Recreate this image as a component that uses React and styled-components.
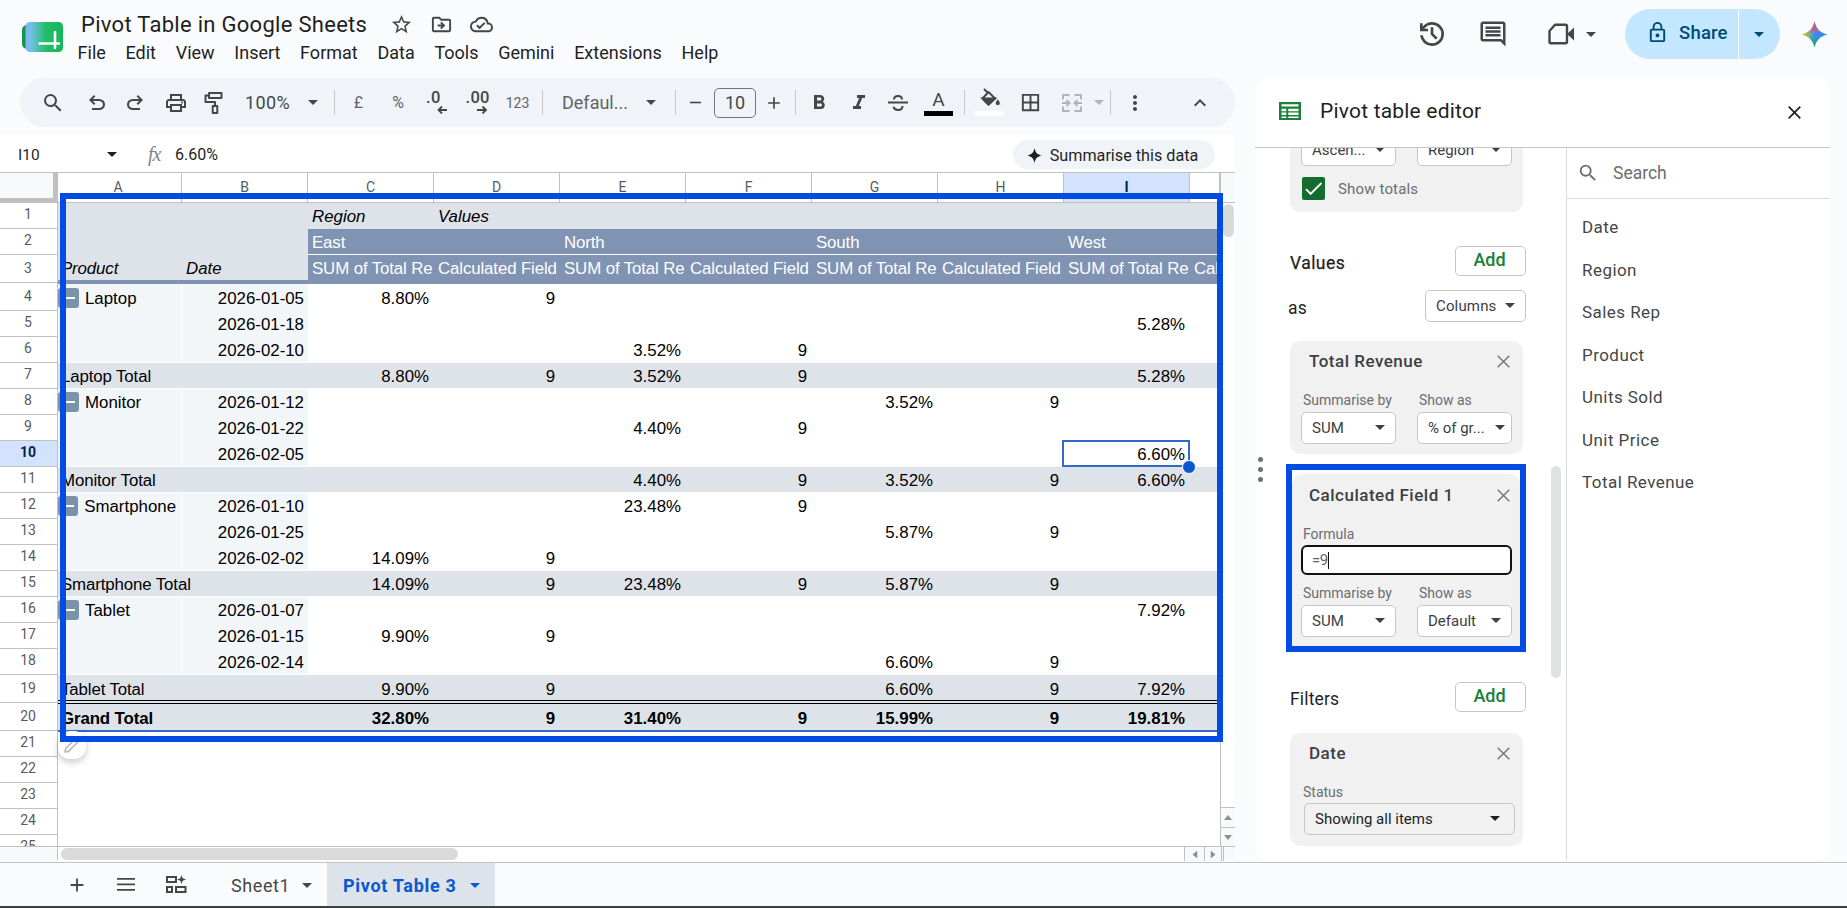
import React from 'react';
import styled, { createGlobalStyle, css } from 'styled-components';
import {
  MdSearch, MdStarBorder, MdOutlineDriveFileMove, MdOutlineCloudDone,
  MdOutlineComment, MdLockOutline, MdOutlinePrint, MdFormatBold, MdFormatItalic,
  MdBorderAll, MdMoreVert, MdKeyboardArrowUp, MdAdd, MdRemove, MdCheck,
} from 'react-icons/md';

const GlobalStyle = createGlobalStyle`
  * { box-sizing: border-box; }
  body {
    margin: 0;
    background: #f9fbfd;
    font-family: Roboto, "Liberation Sans", sans-serif;
    color: #1f1f1f;
    overflow: hidden;
  }
  svg { display: block; flex: none; }
`

const Page = styled.div`
  display: flex;
  flex-direction: column;
  width: 1847px;
  height: 908px;
  background: #f9fbfd;
  border-bottom: 2px solid #3c4043;
`

/* ---------- title bar ---------- */
const TitleBar = styled.header`
  display: flex;
  height: 78px;
  padding-left: 22px;
  color: #444746;
`
const Logo = styled.svg`
  margin-top: 22px;
`
const TitleBlock = styled.div`
  margin-left: 7px;
  padding-top: 9px;
  flex: 1;
`
const TitleLine = styled.div`
  display: flex;
  align-items: center;
  height: 30px;
  padding-left: 10px;
`
const Title = styled.h1`
  margin: 0 23px 0 0;
  width: 286px;
  white-space: nowrap;
  font-size: 22px;
  letter-spacing: 0.29px;
  font-weight: 400;
  color: #1f1f1f;
`
const TitleIcon = styled.span`
  width: 24px;
  margin-right: 16px;
`
const Menus = styled.nav`
  display: flex;
  gap: 19.7px;
  padding-left: 6.6px;
  height: 27px;
  align-items: center;
  font-size: 18px;
  color: #1f1f1f;
`
const Actions = styled.div`
  display: flex;
  align-items: center;
  height: 50px;
  margin-top: 9px;
`
const Action = styled.span`
  display: flex;
  align-items: center;
  margin-right: ${p => p.$gap}px;
`
const Share = styled.div`
  display: flex;
  width: 155px;
  height: 50px;
  margin-right: 21px;
  border-radius: 25px;
  overflow: hidden;
  background: #c2e7ff;
  color: #004a77;
  font-size: 18.5px;
  font-weight: 500;
`
const ShareMain = styled.div`
  display: flex;
  align-items: center;
  gap: 10px;
  width: 114px;
  padding: 0 0 3px 21px;
  border-right: 1px solid #fff;
  letter-spacing: 0.2px;
`
const ShareMore = styled.div`
  display: flex;
  flex: 1;
  align-items: center;
  justify-content: center;
  padding-right: 1px;
`
const Caret = styled.i`
  flex: none;
  width: 0;
  height: 0;
  border: 5px solid transparent;
  border-top-color: currentColor;
  border-bottom: 0;
`

/* ---------- workspace ---------- */
const Main = styled.main`
  display: flex;
  height: 784px;
`
const Workspace = styled.section`
  width: 1235px;
  display: flex;
  flex-direction: column;
`
const Toolbar = styled.div`
  display: flex;
  align-items: center;
  height: 49px;
  margin: 0 0 8px 20px;
  border-radius: 25px;
  background: #f0f4f9;
  color: #444746;
  font-size: 18px;
`
const Tool = styled.span`
  display: flex;
  flex: none;
  align-items: center;
  justify-content: center;
  width: ${p => p.$w}px;
  font-size: ${p => p.$size || 18}px;
  color: ${p => p.$muted ? '#b1b4b8' : p.$soft ? '#5f6368' : 'inherit'};
  letter-spacing: ${p => p.$ls || 0}px;
`
const Divider = styled.span`
  flex: none;
  width: 1px;
  height: 25px;
  background: #c7c7c7;
`
const SizeBox = styled.span`
  display: flex;
  flex: none;
  align-items: center;
  justify-content: center;
  width: 42px;
  height: 30px;
  border: 1px solid #747775;
  border-radius: 5px;
`
const ColorTool = styled.span`
  display: flex;
  flex: none;
  flex-direction: column;
  align-items: center;
  justify-content: flex-end;
  width: 29px;
  height: 27px;
  padding-bottom: ${p => p.$lift || 0}px;
  margin-top: -1px;
  border-bottom: 5px solid ${p => p.$color};
  font-size: 19px;
  line-height: 22px;
`
const Decimal = styled.span`
  display: flex;
  flex-direction: column;
  width: 22px;
  height: 23px;
  font-size: 16.5px;
  font-weight: 500;
  line-height: 14px;
  letter-spacing: 0.3px;
`
const FormulaBar = styled.div`
  display: flex;
  align-items: center;
  height: 38px;
  padding: 2px 20px 0 18px;
  background: #fff;
  border-bottom: 1px solid #c0c0c0;
  font-size: 16px;
`
const NameBox = styled.div`
  display: flex;
  align-items: center;
  justify-content: space-between;
  width: 99px;
  margin-right: 31px;
  font-size: 15.5px;
`
const Fx = styled.i`
  width: 27px;
  font: italic 20px "Liberation Serif", serif;
  letter-spacing: -1px;
  color: #80868b;
`
const Summarise = styled.div`
  display: flex;
  align-items: center;
  justify-content: center;
  gap: 8px;
  width: 202px;
  height: 29px;
  margin-left: auto;
  padding: 1px 3px 0 0;
  border-radius: 15px;
  background: #f0f4f9;
  font-size: 16.2px;
`

/* ---------- grid ---------- */
const Sheet = styled.div`
  position: relative;
  display: flex;
  height: 688px;
  background: #fff;
`
const RowHeads = styled.div`
  display: flex;
  flex-direction: column;
  width: 58px;
  height: 687px;
  overflow: hidden;
  background: #f8f9fa;
`
const Corner = styled.div`
  flex: none;
  height: 30px;
  background: #f8f9fa;
  border-right: 5px solid #c0c0c0;
  border-bottom: 5px solid #c0c0c0;
`
const HeadList = styled.div`
  height: 644px;
  overflow: hidden;
  background: #fff;
  border-bottom: 1px solid #c0c0c0;
`
const RowHead = styled.div`
  display: flex;
  align-items: center;
  justify-content: center;
  height: ${p => p.$h}px;
  padding: 0 1px ${p => p.$h === 28 ? 2 : 3}px 0;
  border-right: 1px solid #c0c0c0;
  border-bottom: 1px solid #c0c0c0;
  font-size: 14px;
  color: #575b5f;
  ${p => p.$active && css`
    background: #d3e3fd;
    color: #041e49;
    font-weight: 700;
  `}
`
const HeadFoot = styled.div`
  flex: 1;
  border-right: 1px solid #c0c0c0;
`
const Cells = styled.div`
  width: 1163px;
  border-right: 1px solid #c0c0c0;
  height: 674px;
  overflow: hidden;
`
const ColHeads = styled.div`
  display: flex;
  height: 30px;
  border-bottom: 1px solid #c0c0c0;
`
const ColHead = styled.div`
  flex: none;
  width: ${p => p.$w}px;
  padding-right: ${p => p.$w === 124 ? 3 : 0}px;
  line-height: 29px;
  text-align: center;
  font-size: 14px;
  color: #575b5f;
  border-right: 1px solid #c0c0c0;
  ${p => p.$active && css`
    background: #d3e3fd;
    color: #041e49;
    font-weight: 700;
  `}
`
const GridRow = styled.div`
  display: flex;
  height: ${p => p.$h}px;
`
const fills = {
  none: '#fff',
  total: '#dee3ea',
  head: '#8093b3',
  pale: '#f3f6f8',
}
const Cell = styled.div`
  display: flex;
  align-items: flex-end;
  flex: none;
  width: ${p => p.$w}px;
  padding: 0 ${p => p.$tight ? 4 : 5}px ${p => p.$pb}px ${p => p.$first ? 3 : 4}px;
  justify-content: ${p => p.$right ? 'flex-end' : 'flex-start'};
  background: ${p => fills[p.$fill]};
  color: ${p => p.$fill === 'head' ? '#fff' : '#000'};
  border-bottom: ${p => p.$line || '0 solid'};
  border-right: ${p => p.$split ? '1px solid #fff' : '0'};
  font: 16.85px/20px "Liberation Sans", Arial, sans-serif;
  font-style: ${p => p.$italic ? 'italic' : 'normal'};
  font-weight: ${p => p.$bold ? 700 : 400};
  letter-spacing: ${p => p.$fill === 'head' || p.$spill ? -0.12 : 0}px;
  white-space: nowrap;
  overflow: ${p => p.$spill ? 'visible' : 'hidden'};
  > span { position: relative; }
`
const Collapse = styled.span`
  display: flex;
  align-items: center;
  justify-content: center;
  width: 21px;
  height: 20px;
  margin: 0 6px 1px -3px;
  border-radius: 3px;
  background: #7b92ab;
  &::after {
    content: '';
    width: 10px;
    height: 2px;
    margin-left: 2px;
    background: #fff;
  }
`
const Selection = styled.div`
  position: absolute;
  left: 1062px;
  top: 267px;
  width: 128px;
  height: 27px;
  border: 2px solid #3069c9;
  &::after {
    content: '';
    position: absolute;
    right: -8px;
    bottom: -9px;
    width: 12px;
    height: 12px;
    border-radius: 50%;
    border: 1px solid #fff;
    background: #0b57d0;
  }
`
const EditPill = styled.div`
  position: absolute;
  left: 58px;
  top: 558px;
  display: flex;
  align-items: center;
  justify-content: center;
  width: 28px;
  height: 28px;
  padding: 1px 2px 0 0;
  border-radius: 12px;
  background: #fff;
  box-shadow: 0 3px 7px rgba(60, 64, 67, 0.28);
`
const Marker = styled.div`
  position: absolute;
  left: 60px;
  top: 20px;
  width: 1163px;
  height: 549px;
  border: 6px solid #034ce3;
`
const SideScroll = styled.div`
  display: flex;
  flex-direction: column;
  width: 14px;
  height: 674px;
  background: #fff;
`
const SideTop = styled.div`
  height: 30px;
  background: #f8f9fa;
  border-bottom: 1px solid #c0c0c0;
`
const SideThumb = styled.div`
  width: 11px;
  height: 33px;
  margin: 1px 0 auto 2px;
  border-radius: 6px;
  background: #dadada;
`
const ScrollButton = styled.div`
  display: flex;
  align-items: center;
  justify-content: center;
  width: ${p => p.$w}px;
  height: ${p => p.$h}px;
  color: #8d8f91;
  background: #f8f9fa;
  border: 0 solid #c0c0c0;
  border-width: ${p => p.$side ? '0 0 0 1px' : '1px 0 0 0'};
`
const BottomScroll = styled.div`
  position: absolute;
  left: 58px;
  right: 0;
  top: 673px;
  height: 15px;
  display: flex;
  border-top: 1px solid #c0c0c0;
  background: #fff;
`
const BottomThumb = styled.div`
  width: 397px;
  height: 12px;
  margin: 1px auto 0 3px;
  border-radius: 6px;
  background: #dadada;
`
const ScrollCorner = styled.div`
  width: 12px;
  background: #f8f9fa;
  border-left: 1px solid #c0c0c0;
`

/* ---------- pivot editor ---------- */
const Panel = styled.aside`
  width: 575px;
  height: 783px;
  margin-left: 20px;
  border-radius: 16px;
  background: #fff;
  overflow: hidden;
`
const PanelHead = styled.div`
  display: flex;
  align-items: center;
  height: 70px;
  padding: 0 29px 3px 24px;
  border-bottom: 1px solid #c4c7c5;
  font-size: 21px;
  letter-spacing: 0.2px;
  svg:last-child { margin: 2px 0 0 auto; }
`
const PanelTitle = styled.span`
  margin-left: 19px;
`
const PanelBody = styled.div`
  display: flex;
  height: 713px;
`
const Setup = styled.div`
  display: flex;
  flex: none;
  width: 312px;
  border-right: 1px solid #dadce0;
`
const Grip = styled.div`
  display: flex;
  flex-direction: column;
  justify-content: center;
  gap: 5px;
  width: 8px;
  margin-left: 3px;
  padding-bottom: 71px;
  span {
    width: 5px;
    height: 5px;
    border-radius: 50%;
    background: #6f7173;
  }
`
const SetupList = styled.div`
  width: 273px;
  padding-left: 24px;
`
const SetupScroll = styled.div`
  width: 10px;
  height: 212px;
  margin: 318px 0 0 12px;
  border-radius: 5px;
  background: #e0e2e1;
`
const Card = styled.div`
  width: 233px;
  height: ${p => p.$h}px;
  padding: ${p => p.$cut ? '0' : '10px'} 11px 0 11px;
  border-radius: ${p => p.$cut ? '0 0 10px 10px' : '10px'};
  background: #f1f1f1;
`
const Highlight = styled.div`
  width: 240px;
  height: 188px;
  margin: 10px 0 0 -4px;
  padding: 4px 0 0 0;
  border: 6px solid #034ce3;
  ${Card} {
    width: 228px;
    padding: 11px 8px 0 9px;
    border-radius: 10px 10px 0 0;
  }
`
const CardTitle = styled.div`
  display: flex;
  align-items: center;
  justify-content: space-between;
  height: 20px;
  padding: 0 2px 0 8px;
  font-size: 17px;
  font-weight: 500;
  letter-spacing: 0.5px;
  color: #3c4043;
  svg { color: #6b6e70; }
`
const Pair = styled.div`
  display: flex;
  justify-content: space-between;
  margin-top: ${p => p.$top || 0}px;
`
const Field = styled.div`
  width: 95px;
`
const Label = styled.div`
  height: 20px;
  margin: 0 0 ${p => p.$close ? 2 : 3}px 2px;
  font-size: 14px;
  line-height: 22px;
  color: #6b6e70;
`
const Select = styled.div`
  display: flex;
  align-items: center;
  justify-content: space-between;
  width: ${p => p.$w || 95}px;
  height: 32px;
  padding: 0 ${p => p.$pr || 10}px 1px 10px;
  border: 1px solid #c4c7c5;
  border-radius: 5px;
  background: ${p => p.$clear ? 'transparent' : '#fff'};
  color: ${p => p.$clear ? '#1f1f1f' : '#3c4043'};
  font-size: 15px;
  white-space: nowrap;
`
const CheckRow = styled.div`
  display: flex;
  align-items: center;
  height: 23px;
  margin-top: 11px;
  font-size: 15px;
  letter-spacing: 0.15px;
  color: #6b6e70;
`
const Check = styled.span`
  display: flex;
  align-items: center;
  justify-content: center;
  width: 23px;
  height: 23px;
  margin: 0 13px 0 1px;
  border-radius: 2px;
  background: #146c2e;
  color: #fff;
`
const SectionHead = styled.div`
  display: flex;
  align-items: center;
  justify-content: space-between;
  width: ${p => p.$shift ? 238 : 236}px;
  height: 30px;
  margin: ${p => p.$top}px 0 0 ${p => p.$shift ? -2 : 0}px;
  font-size: 17.5px;
  letter-spacing: ${p => p.$bold ? 0.45 : 0.15}px;
  -webkit-text-stroke: ${p => p.$bold ? 0.25 : 0}px;
`
const SectionName = styled.span`
  padding-top: 3px;
`
const AddButton = styled.button`
  width: 71px;
  height: 30px;
  padding: 0 2px 3px 0;
  border: 1px solid #c4c7c5;
  border-radius: 5px;
  background: #fff;
  color: #188038;
  font: 500 18px Roboto, sans-serif;
  -webkit-text-stroke: 0;
`
const FormulaInput = styled.div`
  display: flex;
  align-items: center;
  width: 211px;
  height: 30px;
  padding-left: 9px;
  border: 2px solid #111;
  border-radius: 6px;
  background: #fff;
  font-size: 15px;
  letter-spacing: -0.5px;
  color: #5f6368;
  &::after {
    content: '';
    width: 1px;
    height: 17px;
    background: #111;
  }
`
const FieldList = styled.div`
  flex: 1;
`
const SearchBox = styled.div`
  display: flex;
  align-items: center;
  gap: 14px;
  height: 51px;
  padding-left: 10px;
  border-bottom: 1px solid #dadce0;
  font-size: 17.5px;
  color: #6b6e70;
`
const FieldName = styled.div`
  height: 42.5px;
  padding-left: 15px;
  line-height: 42px;
  font-size: 17px;
  letter-spacing: 0.45px;
  color: #444746;
`
const FieldNames = styled.div`
  padding-top: 7.4px;
`
const Gap = styled.div`
  height: ${p => p.$h}px;
`
const StatusSelect = styled.div`
  margin-left: 3px;
`
// scrolled half out of view under the panel heading
const CutBox = styled.div`
  display: flex;
  align-items: flex-end;
  height: 18px;
  overflow: hidden;
`

/* ---------- sheet tabs ---------- */
const TabBar = styled.footer`
  display: flex;
  align-items: center;
  height: 44px;
  border-top: 1px solid #c0c4c4;
  color: #444746;
`
const TabTool = styled.span`
  display: flex;
  flex: none;
  justify-content: center;
  width: ${p => p.$w}px;
  padding-left: ${p => p.$pl || 0}px;
`
const Tab = styled.div`
  display: flex;
  align-items: center;
  gap: ${p => p.$active ? 13 : 12}px;
  width: ${p => p.$w}px;
  height: 43px;
  padding: 1px 0 0 ${p => p.$active ? 16 : 31}px;
  font-size: 18px;
  letter-spacing: 0.6px;
  ${p => p.$active && css`
    background: #dde3ea;
    color: #0b57d0;
    font-weight: 700;
    letter-spacing: 0.7px;
  `}
`

const menus = ['File', 'Edit', 'View', 'Insert', 'Format', 'Data', 'Tools', 'Gemini', 'Extensions', 'Help'];
const letters = ['A', 'B', 'C', 'D', 'E', 'F', 'G', 'H', 'I', ''];
const colWidth = (i) => (i === 0 ? 124 : i === 9 ? 30 : 126);
const fields = ['Date', 'Region', 'Sales Rep', 'Product', 'Units Sold', 'Unit Price', 'Total Revenue'];

const headHeight = (n) => ([3, 4, 19, 20].includes(n) ? 28 : 26);
const cellHeight = { 3: 29, 4: 27, 19: 29, 20: 28 };
// space under the text, bottom border included
const bottomPad = { 3: 5, 19: 4, 20: 3 };

// values are keyed by column letter
const rows = [
  { type: 'top', C: 'Region', D: 'Values' },
  { type: 'region', C: 'East', E: 'North', G: 'South', I: 'West' },
  { type: 'names', A: 'Product', B: 'Date' },
  { product: 'Laptop', B: '2026-01-05', C: '8.80%', D: '9' },
  { B: '2026-01-18', I: '5.28%' },
  { B: '2026-02-10', E: '3.52%', F: '9', last: true },
  { type: 'total', A: 'Laptop Total', C: '8.80%', D: '9', E: '3.52%', F: '9', I: '5.28%' },
  { product: 'Monitor', B: '2026-01-12', G: '3.52%', H: '9' },
  { B: '2026-01-22', E: '4.40%', F: '9' },
  { B: '2026-02-05', I: '6.60%', last: true },
  { type: 'total', A: 'Monitor Total', E: '4.40%', F: '9', G: '3.52%', H: '9', I: '6.60%' },
  { product: 'Smartphone', B: '2026-01-10', E: '23.48%', F: '9' },
  { B: '2026-01-25', G: '5.87%', H: '9' },
  { B: '2026-02-02', C: '14.09%', D: '9', last: true },
  { type: 'total', A: 'Smartphone Total', C: '14.09%', D: '9', E: '23.48%', F: '9', G: '5.87%', H: '9' },
  { product: 'Tablet', B: '2026-01-07', I: '7.92%' },
  { B: '2026-01-15', C: '9.90%', D: '9' },
  { B: '2026-02-14', G: '6.60%', H: '9', last: true },
  { type: 'total', A: 'Tablet Total', C: '9.90%', D: '9', G: '6.60%', H: '9', I: '7.92%' },
  { type: 'grand', A: 'Grand Total', C: '32.80%', D: '9', E: '31.40%', F: '9', G: '15.99%', H: '9', I: '19.81%' },
];

const PivotRow = ({ row, n }) => {
  const white = '1px solid #fff';
  return (
    <GridRow $h={cellHeight[n] || 26}>
      {letters.map((letter, i) => {
        const label = i < 2;
        let fill = label ? 'pale' : 'none';
        let line;
        let text = row[letter];
        if (row.type === 'top') fill = 'total';
        if (row.type === 'region') {
          fill = label ? 'total' : 'head';
          line = label ? undefined : white;
        }
        if (row.type === 'names') {
          fill = label ? 'total' : 'head';
          line = label ? '4px solid #8093b3' : undefined;
          if (!label) text = i % 2 === 0 ? 'SUM of Total Re' : 'Calculated Field';
        }
        if (row.type === 'total') {
          fill = 'total';
          line = n === 19 ? '4px double #000' : white;
        }
        if (row.type === 'grand') {
          fill = 'total';
          line = '2px solid #3069c9';
        }
        if (row.last) line = white;
        const border = line ? parseInt(line, 10) : 0;
        const heading = ['top', 'region', 'names'].includes(row.type);
        return (
          <Cell
            key={i}
            $w={colWidth(i)}
            $fill={fill}
            $line={line}
            $pb={(bottomPad[n] ?? 2) - border}
            $first={i === 0}
            $tight={i === 1 || heading}
            $split={i === 0 && fill === 'pale'}
            $right={!heading && i > 0}
            $italic={row.type === 'top' || (row.type === 'names' && label)}
            $bold={row.type === 'grand'}
            $spill={i === 0 && fill === 'total'}
          >
            {row.product && i === 0 && <Collapse />}
            <span>{row.product && i === 0 ? row.product : text}</span>
          </Cell>
        );
      })}
    </GridRow>
  );
}

const X = ({ width = 1.5 }) => (
  <svg width="13" height="13" viewBox="0 0 13 13" fill="none" stroke="currentColor" strokeWidth={width}>
    <path d="M.7.7l11.600 11.600M12.300.7L.7 12.300" />
  </svg>
)

const Symbol = ({ size, d }) => (
  <svg width={size} height={size} viewBox="0 -960 960 960" fill="currentColor">
    <path d={d} />
  </svg>
)

const SheetsLogo = () => (
  <Logo width="42" height="31" viewBox="0 0 42 31">
    <defs>
      <linearGradient id="logoFill" x1="0" x2="1">
        <stop offset="0" stopColor="#7cb8f7" />
        <stop offset="0.15" stopColor="#74bfe6" />
        <stop offset="0.55" stopColor="#22bd68" />
        <stop offset="1" stopColor="#17b557" />
      </linearGradient>
    </defs>
    <rect x="0" y="3" width="20" height="24" rx="5" fill="#14964a" />
    <rect x="3.500" y="0" width="37.500" height="30" rx="4.500" fill="url(#logoFill)" />
    <path d="M17.500 21.500h19.500M33 10v16" stroke="#fff" strokeWidth="2.600" strokeLinecap="round" />
  </Logo>
)

const sparkPath = 'M13.500.5c1.200 6.500 5.500 11.500 13 13-7.500 1.500-11.800 6.500-13 13-1.200-6.500-5.500-11.500-13-13 7.500-1.500 11.800-6.500 13-13z';
const Spark = () => (
  <svg width="27" height="27" viewBox="0 0 27 27">
    <defs>
      <linearGradient id="sparkA" x1="0" y1=".5" x2="1" y2=".5">
        <stop offset="0" stopColor="#f9c10c" />
        <stop offset=".3" stopColor="#8fb56a" />
        <stop offset=".5" stopColor="#3a8cf5" />
        <stop offset="1" stopColor="#3186ff" />
      </linearGradient>
      <linearGradient id="sparkB" x1=".5" y1="0" x2=".5" y2="1">
        <stop offset="0" stopColor="#f0433a" />
        <stop offset=".38" stopColor="#d0607a" stopOpacity=".5" />
        <stop offset=".5" stopColor="#3186ff" stopOpacity="0" />
        <stop offset=".7" stopColor="#14a866" stopOpacity=".4" />
        <stop offset="1" stopColor="#0ebc5f" />
      </linearGradient>
    </defs>
    <path d={sparkPath} fill="url(#sparkA)" />
    <path d={sparkPath} fill="url(#sparkB)" />
  </svg>
)

const DropSelect = ({ children, ...rest }) => (
  <Select {...rest}>
    {children}
    <Caret />
  </Select>
)

const CutSelect = ({ children }) => (
  <CutBox>
    <DropSelect>{children}</DropSelect>
  </CutBox>
)

const TopBar = () => (
  <TitleBar>
    <SheetsLogo />
    <TitleBlock>
      <TitleLine>
        <Title>Pivot Table in Google Sheets</Title>
        <TitleIcon><MdStarBorder size={23} /></TitleIcon>
        <TitleIcon><MdOutlineDriveFileMove size={23} /></TitleIcon>
        <TitleIcon><MdOutlineCloudDone size={23} /></TitleIcon>
      </TitleLine>
      <Menus>
        {menus.map(m => <span key={m}>{m}</span>)}
      </Menus>
    </TitleBlock>
    <Actions>
      <Action $gap={30}>
        <Symbol size={32} d="M480-120q-138 0-240.500-91.500T122-440h82q14 104 92.500 172T480-200q117 0 198.500-81.500T760-480q0-117-81.500-198.500T480-760q-69 0-129 32t-101 88h110v80H120v-240h80v94q51-64 124.500-99T480-840q75 0 140.500 28.500t114 77q48.500 48.500 77 114T840-480q0 75-28.500 140.500t-77 114q-48.500 48.500-114 77T480-120Zm112-192L440-464v-216h80v184l128 128-56 56Z" />
      </Action>
      <Action $gap={39}><MdOutlineComment size={30} /></Action>
      <Action $gap={11}>
        <svg width="28" height="24" viewBox="0 0 28 24" fill="none" stroke="currentColor" strokeWidth="2.400">
          <path d="M8 2.800h10.500a1.500 1.500 0 0 1 1.500 1.500v15.400a1.500 1.500 0 0 1-1.500 1.500H4a1.500 1.500 0 0 1-1.500-1.500V9z" strokeLinejoin="round" />
          <path d="M20 12l7-6.500v13z" fill="currentColor" stroke="none" />
        </svg>
      </Action>
      <Action $gap={29}><Caret /></Action>
      <Share>
        <ShareMain><MdLockOutline size={23} />Share</ShareMain>
        <ShareMore><Caret /></ShareMore>
      </Share>
      <Action $gap={19}><Spark /></Action>
    </Actions>
  </TitleBar>
)

const Tools = () => (
  <Toolbar>
    <Tool $w={66}><MdSearch size={24} /></Tool>
    <Tool $w={21}>
      <Symbol size={24} d="M280-200v-80h284q63 0 109.500-40T720-420q0-60-46.500-100T564-560H312l104 104-56 56-200-200 200-200 56 56-104 104h252q97 0 166.500 63T800-420q0 94-69.500 157T564-200H280Z" />
    </Tool>
    <Tool $w={56}>
      <Symbol size={24} d="M396-200q-97 0-166.500-63T160-420q0-94 69.500-157T396-640h252L544-744l56-56 200 200-200 200-56-56 104-104H396q-63 0-109.500 40T240-420q0 60 46.500 100T396-280h284v80H396Z" />
    </Tool>
    <Tool $w={25}><MdOutlinePrint size={24} /></Tool>
    <Tool $w={51}>
      <svg width="19" height="23" viewBox="0 0 19 23" fill="none" stroke="currentColor" strokeWidth="2">
        <path d="M5 2h12.500v5H5zM5 4.500H1.500V11H11v4M8.700 15h4.600v7H8.700z" strokeLinejoin="round" />
      </svg>
    </Tool>
    <Tool $w={57} $ls={0.4}>100%</Tool>
    <Tool $w={34}><Caret /></Tool>
    <Tool $w={4} />
    <Divider />
    <Tool $w={47} $size={16} $soft>£</Tool>
    <Tool $w={32} $size={16} $soft>%</Tool>
    <Tool $w={46}>
      <Decimal>
        .0
        <svg width="22" height="9" viewBox="0 0 22 9" fill="none" stroke="currentColor" strokeWidth="1.800">
          <path d="M21 5h-8M16 1.500L12.500 5 16 8.500" />
        </svg>
      </Decimal>
    </Tool>
    <Tool $w={33}>
      <Decimal>
        .00
        <svg width="22" height="9" viewBox="0 0 22 9" fill="none" stroke="currentColor" strokeWidth="1.800">
          <path d="M11 5h9M16.500 1.500L20 5l-3.500 3.500" />
        </svg>
      </Decimal>
    </Tool>
    <Tool $w={49} $size={14} $soft>123</Tool>
    <Divider />
    <Tool $w={104} $soft>Defaul...</Tool>
    <Tool $w={8}><Caret /></Tool>
    <Tool $w={20} />
    <Divider />
    <Tool $w={38}><MdRemove size={19} /></Tool>
    <SizeBox>10</SizeBox>
    <Tool $w={36}><MdAdd size={20} /></Tool>
    <Tool $w={3} />
    <Divider />
    <Tool $w={46}><MdFormatBold size={24} /></Tool>
    <Tool $w={33}><MdFormatItalic size={24} /></Tool>
    <Tool $w={46}>
      <svg width="20" height="20" viewBox="0 0 20 20" fill="none" stroke="currentColor" strokeWidth="2">
        <path d="M0 9.500h20M14 6.500C14 4 12.300 3 10 3S6 4 6 6.500M14.500 13c0 2.500-2 4-4.500 4s-4-1-4.500-3.200" />
      </svg>
    </Tool>
    <Tool $w={3} />
    <ColorTool $color="#000">A</ColorTool>
    <Tool $w={11} />
    <Divider />
    <Tool $w={10} />
    <ColorTool $color="#fff" $lift={3}>
      <svg width="22" height="20" viewBox="0 0 22 20" fill="none" stroke="currentColor" strokeWidth="2">
        <path d="M5 1l3.500 3.500M9.500 4l6.500 6.500-6.500 6L3.500 10.500z" strokeLinejoin="round" />
        <path d="M3.500 10.500H16l-6.500 6z" fill="currentColor" />
        <path d="M18.800 11.500c1.200 1.500 2 2.600 2 3.700a2 2 0 0 1-4 0c0-1.100.8-2.200 2-3.700z" fill="currentColor" stroke="none" />
      </svg>
    </ColorTool>
    <Tool $w={52}><MdBorderAll size={23} /></Tool>
    <Tool $w={32} $muted>
      <svg width="20" height="18" viewBox="0 0 20 18" fill="none" stroke="currentColor" strokeWidth="2">
        <path d="M7.500 1H1v4.500M12.500 1H19v4.500M7.500 17H1v-4.500M12.500 17H19v-4.500M0 9h7M4.500 6l3 3-3 3M20 9h-7M15.500 6l-3 3 3 3" />
      </svg>
    </Tool>
    <Tool $w={22} $muted><Caret /></Tool>
    <Divider />
    <Tool $w={48}><MdMoreVert size={24} /></Tool>
    <Tool $w={81}><MdKeyboardArrowUp size={24} /></Tool>
  </Toolbar>
)

const Arrow = ({ turn }) => (
  <svg width="8" height="5" viewBox="0 0 8 5" fill="currentColor" transform={`rotate(${turn})`}>
    <path d="M4 0l4 5H0z" />
  </svg>
)

const Grid = () => (
  <Sheet>
    <RowHeads>
      <Corner />
      <HeadList>
        {Array.from({ length: 25 }, (_, i) => i + 1).map(n => (
          <RowHead key={n} $h={headHeight(n)} $active={n === 10}>{n}</RowHead>
        ))}
      </HeadList>
      <HeadFoot />
    </RowHeads>
    <Cells>
      <ColHeads>
        {letters.map((l, i) => (
          <ColHead key={i} $w={colWidth(i)} $active={l === 'I'}>{l}</ColHead>
        ))}
      </ColHeads>
      {rows.map((row, i) => <PivotRow key={i} row={row} n={i + 1} />)}
    </Cells>
    <SideScroll>
      <SideTop />
      <SideThumb />
      <ScrollButton $w={14} $h={20}><Arrow turn={0} /></ScrollButton>
      <ScrollButton $w={14} $h={20}><Arrow turn={180} /></ScrollButton>
    </SideScroll>
    <BottomScroll>
      <BottomThumb />
      <ScrollButton $side $w={20} $h={14}><Arrow turn={-90} /></ScrollButton>
      <ScrollButton $side $w={17} $h={14}><Arrow turn={90} /></ScrollButton>
      <ScrollButton $side $w={2} $h={14} />
      <ScrollCorner />
    </BottomScroll>
    <Selection />
    <EditPill>
      <svg width="17" height="17" viewBox="0 0 17 17" fill="none" stroke="#b4b6b8" strokeWidth="1.500">
        <path d="M2 15l.6-3.500L12 2.100a1.500 1.500 0 0 1 2.100 0l.8.8a1.500 1.500 0 0 1 0 2.100L5.500 14.400z" strokeLinejoin="round" />
      </svg>
    </EditPill>
    <Marker />
  </Sheet>
)

const SummaryFields = ({ show, top, pr }) => (
  <Pair $top={top}>
    <Field>
      <Label>Summarise by</Label>
      <DropSelect>SUM</DropSelect>
    </Field>
    <Field>
      <Label>Show as</Label>
      <DropSelect $pr={pr}>{show}</DropSelect>
    </Field>
  </Pair>
)

const PivotEditor = () => (
  <Panel>
    <PanelHead>
      <svg width="22" height="18" viewBox="0 0 22 18">
        <path fill="#188038" d="M0 0h22v18H0z" />
        <path fill="#fff" d="M2.500 2.200h17v2.400h-17zM2.500 6.800h4.800v2.400H2.500zM9.300 6.800h10.200v2.400H9.300zM2.500 10.600h4.800V13H2.500zM9.300 10.600h10.200V13H9.300zM2.500 14.400h4.800V16H2.500zM9.300 14.400h10.200V16H9.300z" />
      </svg>
      <PanelTitle>Pivot table editor</PanelTitle>
      <X width={1.7} />
    </PanelHead>
    <PanelBody>
      <Setup>
        <Grip><span /><span /><span /></Grip>
        <SetupList>
          <Card $h={64} $cut>
            <Pair>
              <CutSelect>Ascen...</CutSelect>
              <CutSelect>Region</CutSelect>
            </Pair>
            <CheckRow>
              <Check><MdCheck size={23} /></Check>
              Show totals
            </CheckRow>
          </Card>
          <SectionHead $top={34} $bold>
            <SectionName>Values</SectionName>
            <AddButton>Add</AddButton>
          </SectionHead>
          <SectionHead $top={15} $shift>
            <SectionName>as</SectionName>
            <DropSelect $w={101}>Columns</DropSelect>
          </SectionHead>
          <Gap $h={20} />
          <Card $h={113}>
            <CardTitle>Total Revenue<X width={1.3} /></CardTitle>
            <SummaryFields show="% of gr..." top={18} pr={6} />
          </Card>
          <Highlight>
            <Card $h={172}>
              <CardTitle>Calculated Field 1<X width={1.3} /></CardTitle>
              <Gap $h={18} />
              <Label $close>Formula</Label>
              <FormulaInput>=9</FormulaInput>
              <SummaryFields show="Default" top={7} />
            </Card>
          </Highlight>
          <SectionHead $top={30}>
            <SectionName>Filters</SectionName>
            <AddButton>Add</AddButton>
          </SectionHead>
          <Gap $h={21} />
          <Card $h={113}>
            <CardTitle>Date<X width={1.3} /></CardTitle>
            <Gap $h={18} />
            <Label $close>Status</Label>
            <StatusSelect>
              <DropSelect $w={211} $clear $pr={14}>Showing all items</DropSelect>
            </StatusSelect>
          </Card>
        </SetupList>
        <SetupScroll />
      </Setup>
      <FieldList>
        <SearchBox><MdSearch size={22} />Search</SearchBox>
        <FieldNames>
          {fields.map(f => <FieldName key={f}>{f}</FieldName>)}
        </FieldNames>
      </FieldList>
    </PanelBody>
  </Panel>
)

const Tabs = () => (
  <TabBar>
    <TabTool $w={108} $pl={46}><MdAdd size={22} /></TabTool>
    <TabTool $w={36}>
      <svg width="18" height="13" viewBox="0 0 18 13" fill="currentColor">
        <path d="M0 0h18v1.800H0zM0 5.500h18v1.800H0zM0 11h18v1.800H0z" />
      </svg>
    </TabTool>
    <TabTool $w={56} $pl={8}>
      <svg width="21" height="19" viewBox="0 0 21 19" fill="none" stroke="currentColor" strokeWidth="2">
        <path d="M1 2h9v5H1zM1 12h5v5H1zM10 12h9.500v5H10z" />
        <path d="M15.500 0l1.200 3.300L20 4.500l-3.300 1.200-1.200 3.300-1.200-3.300L11 4.500l3.300-1.200z" fill="currentColor" stroke="none" />
      </svg>
    </TabTool>
    <Tab $w={127}>Sheet1<Caret /></Tab>
    <Tab $w={168} $active>Pivot Table 3<Caret /></Tab>
  </TabBar>
)

export default function App() {
  return (
    <>
      <GlobalStyle />
      <Page>
        <TopBar />
        <Main>
          <Workspace>
            <Tools />
            <FormulaBar>
              <NameBox>I10<Caret /></NameBox>
              <Fx>fx</Fx>
              6.60%
              <Summarise>
                <svg width="15" height="15" viewBox="0 0 15 15" fill="currentColor">
                  <path d="M7.500 0c.8 4.500 3 6.700 7.500 7.500-4.500.8-6.700 3-7.500 7.500C6.700 10.500 4.500 8.300 0 7.500 4.500 6.700 6.700 4.500 7.500 0z" />
                </svg>
                Summarise this data
              </Summarise>
            </FormulaBar>
            <Grid />
          </Workspace>
          <PivotEditor />
        </Main>
        <Tabs />
      </Page>
    </>
  )
}
